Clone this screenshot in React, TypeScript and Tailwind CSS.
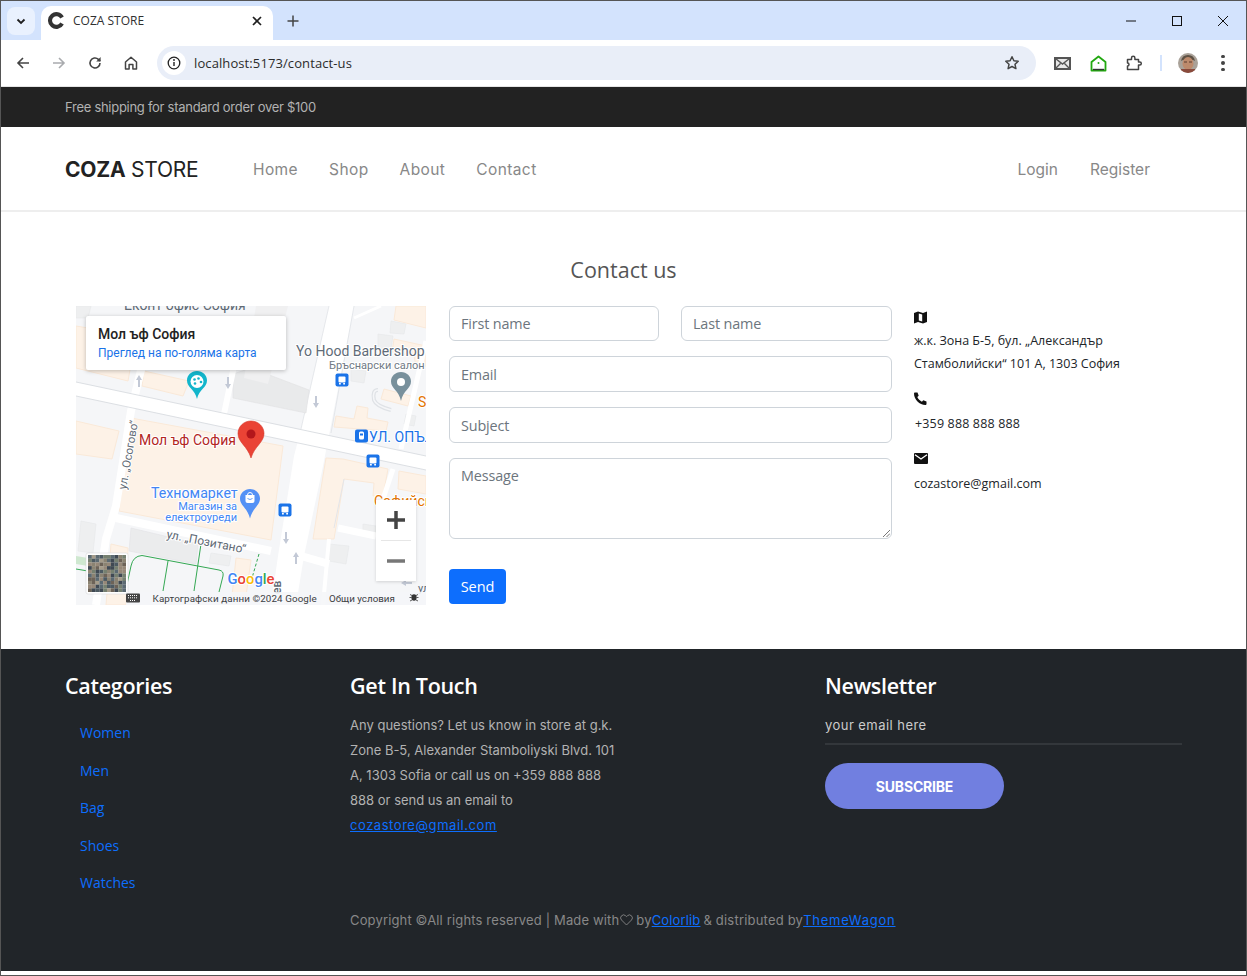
import React from "react";

const poppins = "font-['Inter',sans-serif]";
const segoe = "font-['Open_Sans',sans-serif]";

function Ico({ children, w = 20, h = 20, vb = "0 0 20 20", cls = "" }: { children: React.ReactNode; w?: number; h?: number; vb?: string; cls?: string }) {
  return (
    <svg width={w} height={h} viewBox={vb} fill="none" className={cls}>
      {children}
    </svg>
  );
}

function BrowserChrome() {
  return (
    <div className="shrink-0">
      <div className="h-[39px] bg-[#d3e3fd] flex items-end relative">
        <div className="ml-[6px] mb-[5px] w-[28px] h-[28px] rounded-lg bg-[#e9f1fe] flex items-center justify-center">
          <Ico w={12} h={12} vb="0 0 12 12"><path d="M2.5 4.5 6 8l3.5-3.5" stroke="#1f1f1f" strokeWidth="1.8" /></Ico>
        </div>
        <div className="ml-[6px] w-[232px] h-[34px] bg-white rounded-t-[10px] flex items-center pl-[7px] pr-[10px] pb-[5px]">
          <Ico w={17} h={17} vb="0 0 16 16"><path d="M13.200 5.200A6 6 0 1 0 13.200 10.800" stroke="#333" strokeWidth="3.800" /></Ico>
          <span className="ml-[8px] text-[12px] text-[#303030] font-['Open_Sans',sans-serif] flex-1">COZA STORE</span>
          <Ico w={12} h={12} vb="0 0 12 12"><path d="M2 2l8 8M10 2l-8 8" stroke="#1f1f1f" strokeWidth="1.7" /></Ico>
        </div>
        <div className="ml-[10px] mb-[9px] w-[20px] h-[20px] flex items-center justify-center">
          <Ico w={12} h={12} vb="0 0 12 12"><path d="M6 0.5v11M.5 6h11" stroke="#444" strokeWidth="1.5" /></Ico>
        </div>
        <div className="ml-auto mb-[5px] flex items-center">
          <div className="w-[46px] h-[28px] flex items-center justify-center">
            <Ico w={12} h={12} vb="0 0 12 12"><path d="M1 6h10" stroke="#111" strokeWidth="1" /></Ico>
          </div>
          <div className="w-[46px] h-[28px] flex items-center justify-center">
            <Ico w={12} h={12} vb="0 0 12 12"><rect x="1.5" y="1.5" width="9" height="9" stroke="#111" strokeWidth="1" /></Ico>
          </div>
          <div className="w-[46px] h-[28px] flex items-center justify-center">
            <Ico w={12} h={12} vb="0 0 12 12"><path d="M1 1l10 10M11 1L1 11" stroke="#111" strokeWidth="1" /></Ico>
          </div>
        </div>
      </div>
      <div className="h-[46px] bg-white rounded-tr-[8px] flex items-center border-b border-[#e5e5e5] box-content">
        <div className="ml-[13px] w-[18px] flex justify-center">
          <Ico w={16} h={16} vb="0 0 16 16"><path d="M14 8H3M8 3 3 8l5 5" stroke="#444" strokeWidth="1.6" /></Ico>
        </div>
        <div className="ml-[18px] w-[18px] flex justify-center">
          <Ico w={16} h={16} vb="0 0 16 16"><path d="M2 8h11M8 3l5 5-5 5" stroke="#a9abae" strokeWidth="1.6" /></Ico>
        </div>
        <div className="ml-[18px] w-[18px] flex justify-center">
          <Ico w={16} h={16} vb="0 0 16 16"><path d="M13 8a5 5 0 1 1-1.6-3.7L13.2 6" stroke="#444" strokeWidth="1.6" /><path d="M13.6 2v4.4H9.2z" fill="#444" /></Ico>
        </div>
        <div className="ml-[18px] w-[18px] flex justify-center">
          <Ico w={16} h={16} vb="0 0 16 16"><path d="M2.5 7 8 2.2 13.5 7v7h-3.6V9.5H6.1V14H2.5z" stroke="#444" strokeWidth="1.5" strokeLinejoin="round" /></Ico>
        </div>
        <div className="ml-[17px] w-[879px] h-[34px] rounded-full bg-[#e9eef8] flex items-center pl-[5px] pr-[16px]">
          <div className="w-[24px] h-[24px] rounded-full bg-white flex items-center justify-center">
            <Ico w={14} h={14} vb="0 0 14 14">
              <circle cx="7" cy="7" r="5.8" stroke="#222" strokeWidth="1.3" />
              <path d="M7 6v4" stroke="#222" strokeWidth="1.4" />
              <circle cx="7" cy="4" r=".9" fill="#222" />
            </Ico>
          </div>
          <span className="ml-[8px] pt-[1px] text-[13px] text-[#2b2b2b] font-['Open_Sans',sans-serif] tracking-[0.1px] flex-1">localhost:5173/contact-us</span>
          <Ico w={16} h={16} vb="0 0 16 16"><path d="M8 1.8l1.9 4 4.3.5-3.2 3 .9 4.3L8 11.5l-3.9 2.1.9-4.3-3.2-3 4.3-.5z" stroke="#444" strokeWidth="1.5" strokeLinejoin="round" /></Ico>
        </div>
        <div className="ml-[17px] w-[18px] flex justify-center">
          <Ico w={17} h={13} vb="0 0 17 13"><rect x="1" y="1" width="15" height="11" fill="#e8e8e8" stroke="#555" strokeWidth="2" /><path d="M1.5 1.5 8.5 7l7-5.5M1.5 11.5l5-5M15.500 11.500l-5-5" stroke="#555" strokeWidth="1.4" /></Ico>
        </div>
        <div className="ml-[18px] w-[18px] flex justify-center">
          <Ico w={17} h={17} vb="0 0 17 17"><path d="M8.500 1.500 15.500 7v8.500h-14V7z" fill="#fff" stroke="#22a810" strokeWidth="1.8" strokeLinejoin="round" /><circle cx="8.500" cy="8" r="1" fill="#22a810" /><path d="M3 14.500h11" stroke="#333" strokeWidth="1.400" /></Ico>
        </div>
        <div className="ml-[18px] w-[18px] flex justify-center">
          <Ico w={17} h={16} vb="0 0 17 16"><path d="M1.500 4.500H5.500V3a1.700 1.700 0 0 1 3.400 0v1.500H12.500V7h1.300a1.500 1.500 0 0 1 0 3H12.500v4.500H1.500V11a1.500 1.500 0 0 0 0-3z" stroke="#444" strokeWidth="1.500" strokeLinejoin="round" /></Ico>
        </div>
        <div className="ml-[17px] w-[2px] h-[16px] bg-[#d3e3fd]" />
        <div className="ml-[16px]">
          <Ico w={20} h={20} vb="0 0 20 20">
            <clipPath id="av"><circle cx="10" cy="10" r="10" /></clipPath>
            <g clipPath="url(#av)">
              <rect width="20" height="20" fill="#a9a198" />
              <path d="M3 8Q4 2 10 2t7 6l-2-1H5z" fill="#5e5144" />
              <ellipse cx="10" cy="10.500" rx="5.500" ry="6.500" fill="#bd8a6c" />
              <path d="M6 9h3M11 9h3" stroke="#5a3c2e" strokeWidth="1" />
              <rect x="3" y="16" width="14" height="4" fill="#8a4a3c" />
            </g>
          </Ico>
        </div>
        <div className="ml-[23px] flex flex-col gap-[3px]">
          <div className="w-[3.500px] h-[3.500px] rounded-full bg-[#444]" />
          <div className="w-[3.500px] h-[3.500px] rounded-full bg-[#444]" />
          <div className="w-[3.500px] h-[3.500px] rounded-full bg-[#444]" />
        </div>
      </div>
    </div>
  );
}

const satPalette = ["#5c6a72", "#8b8372", "#3f4a52", "#a59c8a", "#76806f", "#4d5a62", "#968878", "#6d6458"];
const satIndex = (i: number) => Math.floor(Math.abs(Math.sin(i * 12.9898) * 43758.5453)) % satPalette.length;

function MapDrawing() {
  const peach = "#fdf2e7";
  const peachEdge = "#fae9d8";
  const bldg = "#eeeff0";
  const road = "#ffffff";
  const edge = "#d8dbe0";
  const halo = { paintOrder: "stroke" as const, stroke: "#ffffff", strokeWidth: 2.2, strokeLinejoin: "round" as const };
  const peaches = [
    "55,112 207,140 195,234 43,205",
    "0,115 43,125 36,153 0,148",
    "0,20 60,30 52,75 0,62",
    "68,65 113,75 107,90 66,80",
    "260,110 278,113 281,100 292,102 291,112 312,116 310,125 258,121",
    "308,83 335,90 332,100 305,93",
    "320,0 350,0 350,22 318,14",
    "318,33 350,40 350,60 340,60 338,50 316,46",
    "250,152 267,153 312,163 307,190 297,190 298,177 268,173 258,233 237,233 247,170",
    "323,165 350,170 350,188 322,183",
    "160,252 175,254 170,290 156,290",
    "35,238 52,242 50,299 30,299",
  ];
  const greys = [
    "5,215 20,218 17,247 2,245",
    "135,247 155,250 153,260 133,257",
    "253,238 273,240 270,258 253,255",
    "287,218 300,220 300,228 287,227",
    "315,15 330,18 328,28 314,27",
    "302,28 317,30 315,43 302,42",
    "275,63 290,65 288,77 275,75",
    "0,0 15,0 12,12 0,12",
    "330,108 340,110 338,120 328,118",
  ];
  return (
    <svg viewBox="0 0 350 299" width={350} height={299} className="block font-['Roboto',sans-serif]">
      <defs>
        <filter id="satblur"><feGaussianBlur stdDeviation="0.7" /></filter>
        <clipPath id="satclip"><rect x="12" y="249" width="38" height="37" /></clipPath>
      </defs>
      <rect width="350" height="299" fill="#f5f6f8" />
      {/* vertical wide road */}
      <polygon points="253,0 278,0 247,160 228,250 220,299 195,299 202,250 218,150 225,123" fill={road} />
      <path d="M253 0 225 123M278 0 255 127" stroke={edge} strokeWidth=".6" />
      {/* blocks */}
      {peaches.map((p) => (
        <polygon key={p} points={p} fill={peach} stroke={peachEdge} strokeWidth="1" />
      ))}
      {greys.map((p) => (
        <polygon key={p} points={p} fill={bldg} stroke="#e6e7e9" strokeWidth=".6" />
      ))}
      {/* gray 3D buildings */}
      <polygon points="157,68 175,62 233,84 230,107 157,92" fill="#e9eaeb" stroke="#e0e1e3" strokeWidth=".6" />
      <polygon points="180,0 212,0 192,78 168,72" fill="#f0f0f1" />
      <polygon points="55,222 122,238 120,258 53,245" fill="#ebeced" stroke="#e2e3e5" strokeWidth=".6" />
      {/* thin roads */}
      <path d="M66 60 55 105 40 200 30 233 20 299" stroke={road} strokeWidth="8" fill="none" />
      <path d="M158 60 148 108" stroke={road} strokeWidth="6" />
      <path d="M350 35 325 143" stroke={road} strokeWidth="5" />
      <path d="M278 12 305 0" stroke={road} strokeWidth="3" />
      <path d="M40 212 195 245" stroke={road} strokeWidth="8" />
      <path d="M225 250 253 258" stroke={road} strokeWidth="8" />
      <path d="M262 222 300 230" stroke={road} strokeWidth="7" />
      <path d="M253 233 247 299" stroke={road} strokeWidth="4" />
      <path d="M317 163 307 193" stroke={road} strokeWidth="5" />
      <path d="M268 173 258 222" stroke="#e3e5e9" strokeWidth="1" />
      <path d="M302 84Q296 84 298 94 300 100 315 104" stroke="#dfe2e6" strokeWidth="4" fill="none" />
      <path d="M302 84Q296 84 298 94 300 100 315 104" stroke="#f5f6f8" strokeWidth="1.500" fill="none" />
      {/* main road */}
      <polygon points="0,76 350,150 350,164 0,90" fill={road} />
      <path d="M0 76 350 150M0 90 350 164" stroke={edge} strokeWidth=".9" />
      {/* park and paths */}
      <polygon points="0,250 12,252 12,260 0,258" fill="#cfe8d0" />
      <g stroke="#34a853" strokeWidth="1" fill="none">
        <path d="M50 283 55 260Q57 250 66 249.500L143 264Q148 265 147 270L143 286" />
        <path d="M92 255 87 285M125 238 118 285M0 263 12 265" />
      </g>
      <path d="M183 248 176 272" stroke="#34a853" strokeWidth="1" strokeDasharray="3 2" />
      {/* arrows */}
      <g fill="#c3c9d6">
        <path d="M60 74l3-5 3 5h-2v7h-2v-7z" />
        <path d="M149 78l3 5 3-5h-2v-7h-2v7z" />
        <path d="M237 97l3 5 3-5h-2v-7h-2v7z" />
        <path d="M207 233l3 5 3-5h-2v-7h-2v7z" />
        <path d="M217 251l3-5 3 5h-2v7h-2v-7z" />
        <path d="M325 277l5-3v2h6v2h-6v2z" />
      </g>
      {/* labels */}
      <text x="48" y="4" fontSize="14" fill="#5f6a75">Еконт офис София</text>
      <text x="220" y="50" fontSize="14" fill="#5f6b78" style={halo}>Yo Hood Barbershop</text>
      <text x="253" y="63" fontSize="11" fill="#6f7a85" style={halo}>Бръснарски салон</text>
      <text x="342" y="101" fontSize="14" fill="#e37400" style={halo}>S</text>
      <text x="63" y="139" fontSize="14" fill="#b3261e" style={halo}>Мол ъф София</text>
      <text x="293" y="136" fontSize="14" fill="#1a73e8" style={halo}>УЛ. ОПЪЛЧЕНСКА</text>
      <text x="0" y="0" fontSize="11.500" fill="#5f6a75" transform="translate(50 184) rotate(-80)" style={halo}>ул. „Осогово“</text>
      <text x="75" y="192" fontSize="14.200" fill="#4285f4" style={halo}>Техномаркет</text>
      <text x="161" y="204" fontSize="11" fill="#4285f4" textAnchor="end" style={halo}>Магазин за</text>
      <text x="161" y="215" fontSize="11" fill="#4285f4" textAnchor="end" style={halo}>електроуреди</text>
      <text x="0" y="0" fontSize="12" fill="#5f6a75" transform="translate(90 232) rotate(11)" style={halo}>ул. „Позитано“</text>
      <text x="298" y="200" fontSize="14" fill="#e37400" style={halo}>Софийски</text>
      <text x="0" y="0" fontSize="12" fontWeight="500" fill="#5f6a75" transform="translate(205 288) rotate(-90)" style={halo}>ев</text>
      <text x="342" y="286" fontSize="11" fill="#5f6a75">ул</text>
      {/* pins */}
      <path d="M121 65c-5.800 0-10 4.300-10 9.500 0 7 8 9 10 18.500 2-9.500 10-11.500 10-18.500 0-5.200-4.200-9.500-10-9.500z" fill="#12b5cb" />
      <circle cx="121" cy="75.500" r="6.500" fill="#fff" />
      <circle cx="118.500" cy="73.500" r="1.300" fill="#12b5cb" /><circle cx="122.500" cy="72.500" r="1.300" fill="#12b5cb" /><circle cx="125" cy="76" r="1.300" fill="#12b5cb" /><circle cx="119" cy="77.500" r="1.300" fill="#12b5cb" />
      <path d="M325 66c-5.800 0-10 4.300-10 9.500 0 7 8 9 10 19.500 2-10.500 10-12.500 10-19.500 0-5.200-4.200-9.500-10-9.500z" fill="#78909c" />
      <circle cx="325" cy="76" r="4" fill="#fff" />
      <path d="M175 115c-7.500 0-13 5.800-13 12.500 0 9 9.500 12.500 13 24.500 3.500-12 13-15.500 13-24.500 0-6.700-5.500-12.500-13-12.500z" fill="#ea4335" stroke="#d33528" strokeWidth=".6" />
      <circle cx="175" cy="128" r="4.500" fill="#b3161b" />
      <path d="M174 183c-5.500 0-10 4.300-10 9.500 0 7 7.500 9.500 10 20 2.500-10.500 10-13 10-20 0-5.200-4.500-9.500-10-9.500z" fill="#5491f5" />
      <path d="M169.500 189h9v6a2 2 0 0 1-2 2h-5a2 2 0 0 1-2-2z" fill="#fff" />
      <path d="M171.500 189a2.500 2.500 0 0 1 5 0" stroke="#fff" strokeWidth="1" fill="none" />
      <path d="M171.500 192.500q2.500 2 5 0" stroke="#5491f5" strokeWidth=".9" fill="none" />
      {/* transit */}
      {[[266, 74], [297, 155], [209, 204]].map(([x, y]) => (
        <g key={x}>
          <rect x={x - 6.500} y={y - 6.500} width="13" height="13" rx="2" fill="#1a73e8" />
          <rect x={x - 3.500} y={y - 3.500} width="7" height="6" rx="1" fill="#fff" />
          <rect x={x - 3} y={y + 3} width="1.800" height="1.500" fill="#fff" />
          <rect x={x + 1.200} y={y + 3} width="1.800" height="1.500" fill="#fff" />
        </g>
      ))}
      <rect x="279" y="123.500" width="13" height="13" rx="2" fill="#1a73e8" />
      <rect x="283" y="125.500" width="5" height="8" rx="1.500" fill="#fff" />
      <rect x="284" y="127.500" width="3" height="2" fill="#1a73e8" />
      {/* satellite thumbnail */}
      <rect x="10" y="247" width="42" height="41" rx="2" fill="#fff" stroke="#d0d2d5" strokeWidth=".5" />
      <g clipPath="url(#satclip)">
        <g filter="url(#satblur)">
          {Array.from({ length: 100 }).map((_, i) => (
            <rect key={i} x={12 + (i % 10) * 3.800} y={249 + Math.floor(i / 10) * 3.700} width="3.900" height="3.800" fill={satPalette[satIndex(i)]} />
          ))}
        </g>
      </g>
      {/* google */}
      <text x="151.500" y="278" fontSize="14.800" fontWeight="500" style={halo}>
        <tspan fill="#4285f4">G</tspan><tspan fill="#ea4335">o</tspan><tspan fill="#fbbc05">o</tspan><tspan fill="#4285f4">g</tspan><tspan fill="#34a853">l</tspan><tspan fill="#ea4335">e</tspan>
      </text>
      {/* bottom attribution */}
      <rect x="50" y="286" width="300" height="13" fill="#f5f6f8" opacity=".88" />
      <rect x="50" y="287.500" width="14" height="9" rx="1" fill="#444" />
      <path d="M52 289.500h10M52 291.800h10M54 294.500h6" stroke="#fff" strokeWidth="1" strokeDasharray="1 1" />
      <text x="76.500" y="295.500" fontSize="9.800" letterSpacing=".1" fill="#3c4043">Картографски данни ©2024 Google</text>
      <text x="253" y="295.500" fontSize="9.800" fill="#3c4043">Общи условия</text>
      <ellipse cx="338" cy="291.500" rx="2.600" ry="3.200" fill="#333" />
      <path d="M334 288.500l2 1M342 288.500l-2 1M334 295l2-1M342 295l-2-1M333.500 291.500h2M340.500 291.500h2" stroke="#333" strokeWidth=".8" />
    </svg>
  );
}

function MapPanel() {
  return (
    <div className="relative w-[350px] h-[299px] overflow-hidden shrink-0">
      <MapDrawing />
      <div className="absolute left-[10px] top-[10px] w-[200px] h-[54px] bg-white rounded-[2px] shadow-[0_1px_4px_rgba(0,0,0,0.25)] pl-[12px] pt-[9px] font-['Roboto',sans-serif]">
        <div className="text-[14px] leading-[18px] font-medium text-[#222]">Мол ъф София</div>
        <div className="mt-[1px] text-[12px] leading-[18px] text-[#1a73e8] whitespace-nowrap">Преглед на по-голяма карта</div>
      </div>
      <div className="absolute left-[300px] top-[194px] w-[40px] h-[81px] bg-white flex flex-col items-center shadow-[0_1px_3px_rgba(0,0,0,0.15)]">
        <div className="h-[40px] flex items-center justify-center">
          <svg width="18" height="18" viewBox="0 0 18 18"><path d="M9 0v18M0 9h18" stroke="#444" strokeWidth="3.500" /></svg>
        </div>
        <div className="w-[30px] h-px bg-[#e6e6e6]" />
        <div className="h-[40px] flex items-center justify-center">
          <svg width="18" height="18" viewBox="0 0 18 18"><path d="M0 9h18" stroke="#777" strokeWidth="3.500" /></svg>
        </div>
      </div>
    </div>
  );
}

const inputCls = "h-full w-full border border-[#ced4da] rounded-[6px] px-[11px] text-[#6c757d] text-[14.4px] bg-white outline-none placeholder:text-[#6c757d] font-['Open_Sans',sans-serif] tracking-[-0.15px]";

function ContactForm() {
  return (
    <form className="ml-[23px] w-[443px] shrink-0 flex flex-col">
      <div className="flex gap-[22px] h-[35px]">
        <div className="w-[210px] shrink-0"><input className={inputCls} placeholder="First name" readOnly /></div>
        <div className="flex-1"><input className={inputCls} placeholder="Last name" readOnly /></div>
      </div>
      <div className="mt-[15px] h-[36px]"><input className={inputCls} placeholder="Email" readOnly /></div>
      <div className="mt-[15px] h-[36px]"><input className={inputCls} placeholder="Subject" readOnly /></div>
      <div className="mt-[15px] h-[81px] relative">
        <div className={inputCls + " pt-[5px] leading-[24px]"}>Message</div>
        <svg className="absolute right-[2px] bottom-[2px]" width="8" height="8" viewBox="0 0 8 8"><path d="M1 8l7-7M4.500 8 8 4.500" stroke="#777" strokeWidth="1" /></svg>
      </div>
      <button type="button" className="mt-[30px] w-[57px] h-[35px] rounded-[4px] bg-[#0d6efd] text-white text-[14.5px] font-['Open_Sans',sans-serif] tracking-[-0.1px]">Send</button>
    </form>
  );
}

function ContactInfo() {
  return (
    <div className={`ml-[22px] flex-1 text-[12.5px] leading-[23px] text-[#212529] ${segoe}`}>
      <div className="h-[23px] flex items-center">
        <svg width="13" height="13" viewBox="0 0 13 13"><path d="M0 2 4 .5 9 2l4-1.500V11L9 12.500 4 11l-4 1.500z" fill="#111" /><path d="M4.800 2.500 8.200 3.500V10.500L4.800 9.500z" fill="#fff" /></svg>
      </div>
      <div className="whitespace-nowrap">ж.к. Зона Б-5, бул. „Александър</div>
      <div className="whitespace-nowrap">Стамболийски“ 101 А, 1303 София</div>
      <div className="mt-[12px] h-[23px] flex items-center">
        <svg width="13" height="13" viewBox="0 0 13 13"><path d="M1 .5h2.500L4.700 3.700 3.300 5.100c.8 1.900 2.700 3.800 4.600 4.600L9.300 8.300 12.500 9.500V12c0 .5-.5 1-1 1C5.500 13 0 7.500 0 1.500 0 1 .5.500 1 .5z" fill="#111" /></svg>
      </div>
      <div className="mt-[2px] ml-[1px] tracking-[0.15px]">+359 888 888 888</div>
      <div className="mt-[12px] h-[23px] flex items-center">
        <svg width="14" height="11" viewBox="0 0 14 11"><rect width="14" height="11" rx="1" fill="#111" /><path d="M1 1.800 7 6l6-4.200" stroke="#fff" strokeWidth="1.300" fill="none" /></svg>
      </div>
      <div className="mt-[2px]">cozastore@gmail.com</div>
    </div>
  );
}

function Footer() {
  const heading = `text-[21.5px] leading-[30px] font-semibold text-white tracking-[-0.3px] ${segoe}`;
  return (
    <footer className={`bg-[#212529] h-[322px] shrink-0 flex flex-col pl-[64px] ${poppins}`}>
      <div className="flex pt-[22px]">
        <div className="w-[285px]">
          <h4 className={heading}>Categories</h4>
          <ul className={`mt-[21px] ml-[15px] text-[14px] leading-[22px] text-[#0d6efd] flex flex-col gap-[15.500px] ${segoe}`}>
            <li>Women</li><li>Men</li><li>Bag</li><li>Shoes</li><li>Watches</li>
          </ul>
        </div>
        <div className="w-[475px]">
          <h4 className={heading}>Get In Touch</h4>
          <div className="mt-[12px] w-[270px] text-[13px] leading-[25px] text-[#b2b2b2] tracking-[0px]">
            <div className="whitespace-nowrap">Any questions? Let us know in store at g.k.</div>
            <div className="whitespace-nowrap">Zone B-5, Alexander Stamboliyski Blvd. 101</div>
            <div className="whitespace-nowrap">A, 1303 Sofia or call us on +359 888 888</div>
            <div className="whitespace-nowrap">888 or send us an email to</div>
            <a className="text-[#0d6efd] underline tracking-[0.55px]">cozastore@gmail.com</a>
          </div>
        </div>
        <div className="w-[357px]">
          <h4 className={heading}>Newsletter</h4>
          <div className="mt-[12px] h-[32px] border-b-2 border-[#33373b] text-[13px] leading-[25px] text-[#cccccc] tracking-[0.45px]">your email here</div>
          <button type="button" className="mt-[18px] w-[179px] h-[46px] rounded-full bg-[#717fe0] text-white text-[14px] font-bold tracking-[-0.2px]">SUBSCRIBE</button>
        </div>
      </div>
      <div className="mt-[15px] ml-[285px] text-[13px] leading-[22px] text-[#888888] tracking-[0.15px] whitespace-nowrap flex items-center">
        <span>Copyright ©All rights reserved | Made with</span>
        <svg className="mx-[1px]" width="13" height="12" viewBox="0 0 13 12"><path d="M6.500 11 1.500 6a3 3 0 0 1 0-4.200 3 3 0 0 1 4.200 0l.8.8.8-.8a3 3 0 0 1 4.200 0 3 3 0 0 1 0 4.200z" fill="none" stroke="#888" strokeWidth=".9" /></svg>
        <span className="ml-[2px]">by</span><a className="text-[#0d6efd] underline">Colorlib</a>
        <span className="ml-[3px] tracking-[0.2px]">&amp; distributed by</span><a className="text-[#0d6efd] underline tracking-[0.75px]">ThemeWagon</a>
      </div>
    </footer>
  );
}

export default function App() {
  return (
    <div className="w-[1247px] h-[976px] overflow-hidden bg-white border border-[#555555] flex flex-col">
      <BrowserChrome />
      <div className={`h-[40px] shrink-0 bg-[#222222] flex items-center pl-[64px] pt-[1px] text-[13px] text-[#b2b2b2] tracking-[-0.28px] ${poppins}`}>
        Free shipping for standard order over $100
      </div>
      <header className={`h-[85px] shrink-0 bg-white border-b-2 border-[#eeeeee] flex items-center pl-[64px] pr-[96px] pt-[2px] ${poppins}`}>
        <div className="w-[188px] text-[21px] text-[#222222] tracking-[-0.25px] whitespace-nowrap"><b>COZA</b> STORE</div>
        <nav className="flex gap-[31px] text-[15.500px] text-[#888888] tracking-[0.4px]">
          <a>Home</a><a>Shop</a><a>About</a><a>Contact</a>
        </nav>
        <div className="ml-auto flex gap-[32px] text-[15.500px] text-[#888888]">
          <a>Login</a><a>Register</a>
        </div>
      </header>
      <main className="h-[437px] shrink-0 bg-white flex flex-col">
        <h2 className={`mt-[43px] text-center text-[21.500px] leading-[30px] font-medium text-[#555555] ${segoe}`}>Contact us</h2>
        <div className="mt-[21px] pl-[75px] flex">
          <MapPanel />
          <ContactForm />
          <ContactInfo />
        </div>
      </main>
      <Footer />
    </div>
  );
}
